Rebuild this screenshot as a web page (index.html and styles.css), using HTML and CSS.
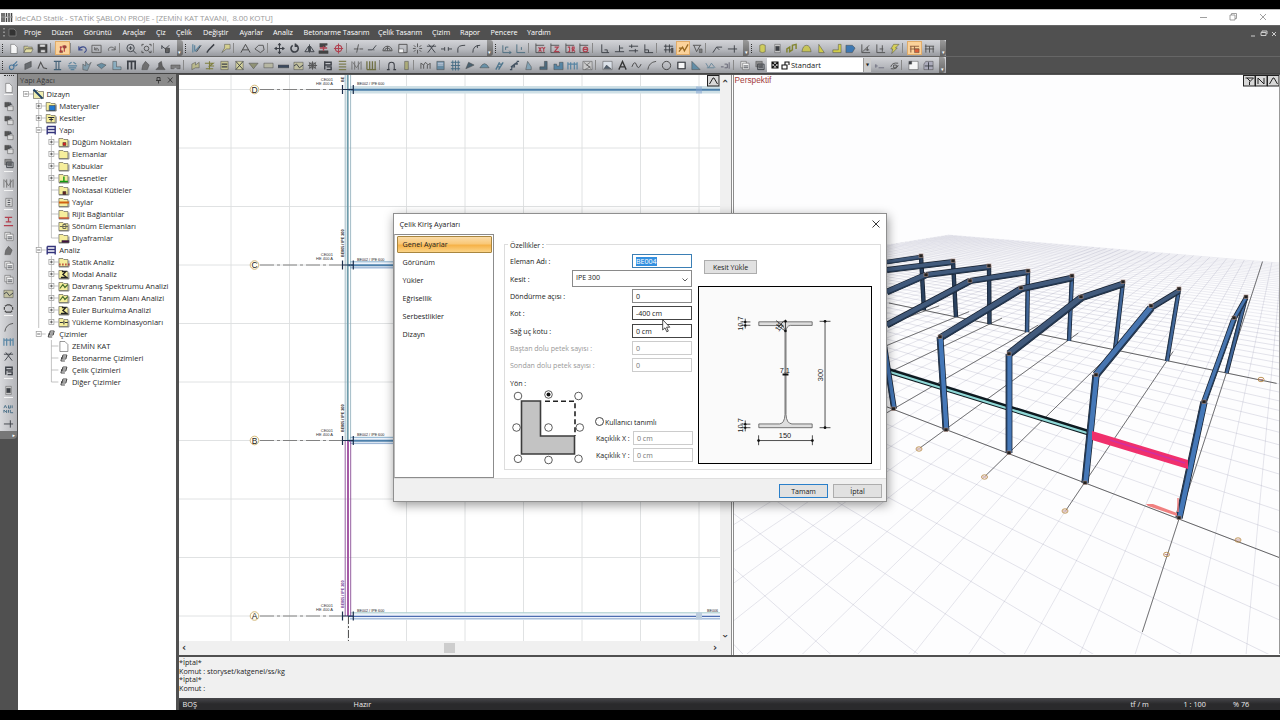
FILE: index.html
```html
<!DOCTYPE html>
<html lang="tr">
<head>
<meta charset="utf-8">
<title>ideCAD Statik</title>
<link rel="stylesheet" href="styles.css">
</head>
<body>
<div class="app">
  <header class="titlebar">
    <svg class="logo" viewBox="0 0 12 11"><path d="M1 1v9M3 1v9M5.500 1v4M5.500 6v4M8 1v9M10.500 1v9" stroke="#444" stroke-width="1.500"/><path d="M0 5h12" stroke="#999"/></svg>
    <span class="title">ideCAD Statik - STATİK ŞABLON PROJE - [ZEMİN KAT TAVANI,&nbsp; 8.00 KOTU]</span>
    <svg class="winbtns" viewBox="0 0 80 15"><g fill="none" stroke="#888" stroke-width=".8"><path d="M0 7.500h7M30 5h5v5h-5zM31.500 5v-1.500h5v5H35M60 4l6 6M66 4l-6 6"/></g></svg>
  </header>
  <nav class="menubar">
    <svg class="menuicon" viewBox="0 0 24 16"><path d="M4 4v9" stroke="#ccc" stroke-dasharray="1.500 2"/><path d="M9 5h5l2 2v5H9z" fill="#333" stroke="#888" stroke-width=".7"/></svg>
    <span style="width:27.500px">Proje</span><span style="width:32px">Düzen</span><span style="width:39px">Görüntü</span><span style="width:33.500px">Araçlar</span><span style="width:20px">Çiz</span><span style="width:27px">Çelik</span><span style="width:36.500px">Değiştir</span><span style="width:33.500px">Ayarlar</span><span style="width:30.500px">Analiz</span><span style="width:74.500px">Betonarme Tasarım</span><span style="width:54px">Çelik Tasarım</span><span style="width:28px">Çizim</span><span style="width:30.500px">Rapor</span><span style="width:36.500px">Pencere</span><span>Yardım</span>
    <svg class="mdibtns" viewBox="0 0 32 16"><path d="M3 12h4M13 8.500h5v3h-5zM14 8v-1h5v3M24 8l4 4M28 8l-4 4" fill="none" stroke="#ccc"/></svg>
  </nav>
  <div class="toolbar" id="bar1"></div>
  <div class="toolbar" id="bar2"></div>
  <main class="work">
    <div class="side"><div class="sidebar" id="side"></div></div>
    <aside class="tree">
      <div class="treehead"><span>Yapı Ağacı</span><svg viewBox="0 0 22 10"><path d="M3 2.500h3v3H3zM2 5.500h5M4.500 5.500v3M14 2.500l4.500 5M18.500 2.500l-4.500 5" fill="none" stroke="#333" stroke-width=".9"/></svg></div>
      <div class="rows" id="tree"></div>
    </aside>
    <div class="views">
      <div class="viewrow">
        <section class="plan">
          <svg class="plansvg" id="plan" viewBox="179 75 541 566"></svg>
          <div class="hscroll"><i>‹</i><b></b><i>›</i></div>
        </section>
        <div class="vscroll"><i>‹</i><i>›</i></div>
        <section class="persp"><svg id="persp" viewBox="734 75 546 579"></svg></section>
      </div>
      <div class="command"><p>*İptal*</p><p>Komut : storyset/katgenel/ss/kg</p><p>*İptal*</p><p>Komut :</p></div>
      <footer class="status"><span class="s1">BOŞ</span><span class="s2">Hazır</span><span class="s3">tf / m</span><span class="s4">1 : 100</span><span class="s5">% 76</span></footer>
    </div>
  </main>
</div>

<div class="dialog">
  <div class="dtitle"><span>Çelik Kiriş Ayarları</span><svg viewBox="0 0 8 8"><path d="M.5.5l7 7M7.500.5l-7 7" stroke="#222" stroke-width=".9"/></svg></div>
  <div class="dbody">
    <ul class="tabs"><li class="on">Genel Ayarlar</li><li>Görünüm</li><li>Yükler</li><li>Eğrisellik</li><li>Serbestlikler</li><li>Dizayn</li></ul>
    <fieldset class="group">
      <legend>Özellikler :</legend>
      <div class="form">
        <div class="f"><label>Eleman Adı :</label><div class="in focus"><mark>BE004</mark></div></div>
        <div class="f"><label>Kesit :</label><div class="in combo">IPE 300<svg viewBox="0 0 6 4"><path d="M.5.5L3 3 5.500.5" fill="none" stroke="#333" stroke-width=".8"/></svg></div></div>
        <div class="f"><label>Döndürme açısı :</label><div class="in">0</div></div>
        <div class="f"><label>Kot :</label><div class="in dark">-400 cm</div></div>
        <div class="f"><label>Sağ uç kotu :</label><div class="in dark">0 cm</div></div>
        <div class="f off"><label>Baştan dolu petek sayısı :</label><div class="in">0</div></div>
        <div class="f off"><label>Sondan dolu petek sayısı :</label><div class="in">0</div></div>
        <div class="f"><label>Yön :</label></div>
        <div class="dir">
          <svg viewBox="510 389 80 78">
            <path d="M521.500 401h19v35h34v18h-53z" fill="#c3c3c3" stroke="#3c3c3c" stroke-width="1.600"/>
            <path d="M545 401.300h30V436" fill="none" stroke="#222" stroke-width="1.600" stroke-dasharray="5 3"/>
            <g fill="#fff" stroke="#333" stroke-width=".8"><circle cx="518" cy="396" r="3.800"/><circle cx="548.500" cy="394.500" r="3.800"/><circle cx="578.500" cy="396" r="3.800"/><circle cx="516.500" cy="427.500" r="3.800"/><circle cx="548.500" cy="427.500" r="3.800"/><circle cx="579.800" cy="427.500" r="3.800"/><circle cx="518" cy="458.800" r="3.800"/><circle cx="548.500" cy="460" r="3.800"/><circle cx="578.500" cy="458.800" r="3.800"/></g>
            <circle cx="548.500" cy="394.500" r="2" fill="#111"/>
          </svg>
          <div class="user">
            <div class="radio"><i></i>Kullanıcı tanımlı</div>
            <div class="g"><label>Kaçıklık X :</label><div class="in">0 cm</div></div>
            <div class="g"><label>Kaçıklık Y :</label><div class="in">0 cm</div></div>
          </div>
        </div>
      </div>
      <div class="preview">
        <button class="btn">Kesit Yükle</button>
        <svg viewBox="698 286 174 178">
          <g fill="#dedede" stroke="#555" stroke-width=".8">
            <path d="M758.500 321.200h54v3.600h-22q-4 .5-4.500 6V415q.5 9 6 9.500h20.500v3.800h-54v-3.800h21q5-.5 5.500-9.500V331q-.5-5.500-4.500-6h-22z"/>
          </g>
          <g stroke="#222" stroke-width=".8" fill="none">
            <path d="M825.500 320v108.500M820 320.700h11M820 428.300h11M758.300 441.300h54.500M758.300 436v10M812.700 436v10M740 321.300h10M740 324.700h10M740 424.700h10M740 428.300h10M744.800 318v10M744.800 421v11M785.500 319v12M776 324l10 7M776 320l8 6M778 327l6-7"/>
          </g>
          <g fill="#111"><circle cx="825.500" cy="320.700" r="1.400"/><circle cx="825.500" cy="428.300" r="1.400"/><circle cx="758.300" cy="441.300" r="1.400"/><circle cx="812.700" cy="441.300" r="1.400"/><circle cx="744.800" cy="321.300" r="1.200"/><circle cx="744.800" cy="324.800" r="1.200"/><circle cx="744.800" cy="424.700" r="1.200"/><circle cx="744.800" cy="428.300" r="1.200"/><circle cx="785.500" cy="320.700" r="1.300"/><circle cx="785.500" cy="330.500" r="1.300"/><path d="M782.500 373.500h6v2h-6z"/></g>
          <g class="dim"><text x="785" y="439" text-anchor="middle">150</text><text x="784.800" y="372.500" text-anchor="middle">7.1</text><text transform="translate(823.500 375) rotate(-90)" text-anchor="middle">300</text><text transform="translate(743 323) rotate(-90)" text-anchor="middle">10.7</text><text transform="translate(743 426) rotate(-90)" text-anchor="middle">10.7</text><text transform="translate(781 328) rotate(-55)" text-anchor="middle">15</text></g>
        </svg>
      </div>
    </fieldset>
  </div>
  <div class="dfoot"><button class="btn ok">Tamam</button><button class="btn">İptal</button></div>
</div>
<svg class="cursor" viewBox="0 0 9 14"><path d="M.7.7v10.300l2.300-2.200 1.800 4 1.500-.7-1.700-3.900h3.200z" fill="#fff" stroke="#222" stroke-width=".8"/></svg>
<script src="app.js"></script>
</body>
</html>
```
FILE: styles.css
```css
* { box-sizing: border-box; margin: 0; padding: 0; }
body { width: 1280px; height: 720px; overflow: hidden; background: #000; font-family: "Open Sans", "Noto Sans", sans-serif; font-size: 7.5px; color: #222; position: relative; }
svg { display: block; }
.app { height: 710px; padding-top: 9px; display: flex; flex-direction: column; background: #000; }
.titlebar { height: 15.500px; flex: none; background: #fff; border-top: 1px solid #bbb; display: flex; align-items: center; }
.logo { width: 12px; height: 11px; margin: 0 2px 0 1px; }
.title { flex: 1; color: #9a9a9a; font-size: 8px; letter-spacing: -.15px; white-space: nowrap; }
.winbtns { width: 80px; height: 15px; }
.menubar { height: 15.500px; flex: none; background: #505050; color: #fff; display: flex; align-items: center; font-size: 7.3px; font-weight: 500; letter-spacing: -.08px; border-top: 1px solid #666; white-space: nowrap; padding-bottom: 1px; }
.menubar span { flex: none; }
.menuicon { width: 24px; height: 16px; flex: none; }
.mdibtns { width: 32px; height: 16px; margin-left: auto; }
.toolbar { height: 17px; flex: none; background: linear-gradient(90deg, transparent 946px, #505050 946px), linear-gradient(#d3d4d8, #b6b8bd 60%, #97999e); border-bottom: 1px solid #666; display: flex; align-items: center; }
#bar2 { border-bottom-color: #444; }
.ic { width: 14.720px; height: 15px; flex: none; padding: 2px 1.900px; }
.ic svg { width: 11px; height: 11px; opacity: .88; }
.ic.act { background: #fbd29a; border: 1px solid #e0ac6a; padding: 1px .9px; height: 14px; }
.sep { width: 5px; flex: none; height: 10px; border-left: 1px solid #888; border-right: 3px solid transparent; }
.grip { width: 5.500px; height: 9px; flex: none; border-left: 1.500px dotted #333; margin-left: 2px; margin-right: -1.500px; }
.end { width: 6px; height: 16px; flex: none; margin: 0 0 0 3.500px; background: linear-gradient(#9a9a9a, #666); border-radius: 0 3px 3px 0; color: #fff; font-size: 5px; line-height: 25px; text-align: center; overflow: hidden; }
.combo2 { width: 104px; height: 14px; flex: none; background: #fff; display: flex; align-items: center; font-size: 7.500px; margin-right: 1px; }
.combo2 svg { width: 22px; height: 10px; margin-left: 2px; }
.combo2 i { margin-left: auto; width: 8px; height: 14px; background: #ccc; border-left: 1px solid #999; font: 4px/14px "DejaVu Sans", sans-serif; text-align: center; }
.work { flex: 1; min-height: 0; display: flex; background: #505050; }
.side { width: 18px; flex: none; background: #505050; }
.sidebar { height: 361px; width: 17px; background: linear-gradient(90deg, #d8d9dc, #b4b5b9); border-radius: 0 0 4px 0; display: flex; flex-direction: column; align-items: center; }
.sidebar .ic { height: 14.450px; }
.sidebar .sep { width: 9px; height: 4.800px; border: 0; border-top: 1px solid #f4f4f4; }
.sidebar .grip { width: 10px; height: 4.500px; margin: 1px 0 0; border: 0; border-top: 1.500px dotted #333; }
.sidebar .tail { margin-top: auto; width: 17px; height: 8px; background: #777; color: #fff; font: 5px/8px "DejaVu Sans", sans-serif; text-align: right; padding-right: 2px; border-radius: 0 0 4px 0; }
.tree { width: 158px; flex: none; background: #fff; display: flex; flex-direction: column; }
.treehead { height: 12px; background: #8b8b8b; color: #3a3a3a; display: flex; align-items: center; justify-content: space-between; padding-left: 2px; font-size: 7.400px; }
.treehead svg { width: 22px; height: 10px; }
.rows { padding-top: 2px; }
.row { height: 12px; display: flex; align-items: center; white-space: nowrap; font-size: 7.600px; letter-spacing: -.03px; color: #2a2a2a; }
.row svg { height: 12px; flex: none; }
.row span { line-height: 12px; }
.views { flex: 1; margin-left: 3px; min-width: 0; display: flex; flex-direction: column; }
.viewrow { height: 581px; flex: none; display: flex; border-top: 1px solid #555; background: #fff; }
.plan { width: 541px; flex: none; display: flex; flex-direction: column; }
.plansvg { width: 541px; height: 566px; }
.plan text { font-family: "Liberation Sans", Arial, sans-serif; }
.hscroll { flex: 1; background: #f0f0f0; display: flex; align-items: center; justify-content: space-between; padding: 0 3px; width: 541px; }
.hscroll i, .vscroll i { font: bold 10px/10px "DejaVu Sans", sans-serif; color: #333; }
.hscroll b { width: 11px; height: 10px; background: #cdcdcd; }
.vscroll { width: 11px; background: #f0f0f0; display: flex; flex-direction: column; justify-content: space-between; align-items: center; padding: 1px 0 14px; }
.vscroll i { transform: rotate(90deg); }
.persp { flex: 1; border-left: 3px double #8d8d8d; min-width: 0; }
.persp svg { width: 546px; height: 579px; }
.persp text { font-family: "Liberation Sans", Arial, sans-serif; }
.command { height: 43px; flex: none; background: #f0f0f0; border-top: 2px solid #505050; padding-top: 1px; font-size: 7.200px; }
.command p { height: 8.700px; line-height: 8.700px; }
.status { flex: 1; background: linear-gradient(#47474b, #2a2a2c 50%); color: #eee; font-size: 7.300px; display: grid; grid-template-columns: 171px 777px 53px 49.500px 1fr; align-items: center; padding-left: 3.500px; }
.dialog { position: absolute; left: 393px; top: 213px; width: 494px; height: 289px; background: #fff; border: 1px solid #8f8f8f; box-shadow: 1px 3px 10px rgba(0,0,0,.4); display: flex; flex-direction: column; font-size: 7.100px; letter-spacing: -.04px; }
.dtitle { height: 19.500px; flex: none; display: flex; align-items: center; justify-content: space-between; padding: 0 6px 0 5.500px; font-size: 7.400px; }
.dtitle svg { width: 8px; height: 8px; }
.dbody { height: 244.500px; flex: none; display: flex; }
.tabs { width: 100px; border: 1px solid #8c8c8c; border-left-color: #bbb; list-style: none; padding: 1.500px 1.500px; font-size: 7.200px; letter-spacing: 0; }
.tabs li { height: 16.500px; line-height: 15.500px; padding-left: 5px; margin-bottom: 1.500px; border: 1px solid transparent; border-radius: 1px; }
.tabs .on { background: linear-gradient(#fbdca8, #f9c878 45%, #f6b248 55%, #fbd488); border-color: #a9863f; }
.group { margin: 6px 5px 8px 10px; flex: 1; border: 1px solid #ddd; display: flex; min-width: 0; }
.group legend { margin-left: 3px; padding: 0 2px; line-height: 10px; }
.form { width: 187px; flex: none; padding: 3px 0 0 5px; }
.f { height: 17.350px; display: flex; justify-content: space-between; align-items: center; }
.in { width: 60px; height: 14px; border: 1px solid #8a8a8a; background: #fff; line-height: 12px; padding-left: 3px; white-space: nowrap; }
.f label { white-space: nowrap; }
.focus { border-color: #3b7fb5; }
.focus mark { background: #3390e0; color: #fff; display: inline-block; line-height: 9px; }
.combo { width: 120px; height: 17px; display: flex; justify-content: space-between; padding-right: 3px; line-height: 13px; flex: none; }
.combo svg { width: 6px; height: 4px; margin-top: 7px; }
.dark { border-color: #444; }
.off { color: #999; }
.off .in, .g .in { border-color: #ccc; color: #777; }
.dir { display: flex; margin-top: -2px; }
.dir > svg { width: 80px; height: 78px; flex: none; }
.user { padding: 26px 0 0 5px; width: 103px; flex: none; }
.radio { display: flex; align-items: center; gap: 1px; height: 13px; margin-bottom: 1px; white-space: nowrap; }
.radio i { width: 9px; height: 9px; border: 1px solid #444; border-radius: 50%; }
.g { display: flex; justify-content: space-between; align-items: center; height: 17.350px; width: 97px; margin-left: 1px; white-space: nowrap; }
.preview { padding: 10.500px 0 0 6px; }
.preview svg { width: 174px; height: 178px; border: 1.500px solid #000; background: #fafafa; margin-top: 11.500px; }
.preview .btn { width: 53px; margin-left: 6px; }
.btn { display: block; height: 14px; width: 49px; border: 1px solid #adadad; background: #e1e1e1; font: 7.100px "Open Sans", "Noto Sans", sans-serif; color: #222; line-height: 11px; text-align: center; letter-spacing: -.04px; }
.dim text { font: 7.500px "Liberation Sans", Arial, sans-serif; fill: #222; }
.dfoot { flex: 1; background: #f0f0f0; border-top: 1px solid #dfdfdf; display: flex; justify-content: flex-end; gap: 5px; padding: 5px 4px 0 0; }
.ok { border: 1.500px solid #2a7fc9; }
.cursor { position: absolute; left: 662px; top: 319px; width: 9px; height: 14px; }
```
FILE: app.js
```js
// Icon artwork, 12x11 units. Each entry is [kind, path, colour].
const K = '#2b2f36', B = '#4f7d99', Y = '#d9d24a', R = '#b03040';
const s = (d, c = K, w = 1) => `<path d="${d}" fill="none" stroke="${c}" stroke-width="${w}"/>`;
const f = (d, c = K) => `<path d="${d}" fill="${c}" stroke="#333" stroke-width=".5"/>`;
const icons = {
  new: f('M3 1h4l3 3v7H3z', '#fff'),
  open: f('M1 3h4l1 1h4v2H3L1 10z', '#cfc98a') + f('M3 6h8l-2 4H1z', '#e9e3a0'),
  save: f('M1 1h10v9H1z', '#333') + f('M3 1h6v3H3zM4 7h5v3H4z', '#ddd'),
  lift: s('M4 3v6M8 2v7M3 4h3M6 3h4', R, 1.3) + f('M3 8h3v2H3zM7 3h3v2H7z', '#c22'),
  undo: s('M2 3v4h4M2 7c2-5 9-4 8 1l-2 2', '#2b3c86', 1.2),
  undob: s('M1 2h10v8H1zM4 4v3h3M4 7c1-3 5-2 4 1', '#555'),
  redo: s('M10 3v4H6M10 7C8 2 1 4 3 8', '#555'),
  zoom: s('M5 1a4 4 0 100 8a4 4 0 100-8M8 8l3 3M3 5h4M5 3v4'),
  ext: s('M1 3V1h2M9 1h2v2M11 8v2H9M3 10H1V8M6 3a2.500 2.500 0 100 5a2.500 2.500 0 100-5M8 8l2 2', '#444'),
  tool: s('M2 3l4 3 4-4M6 6v4h4V5M2 2v4') + f('M6 5h4v4H6z', '#555'),
  brush: s('M2 1v9M4 9l6-7M4 2v6', B, 1.3) + s('M6 9l5-7'),
  pen: s('M2 10l2-3 6-6', K, 1.6),
  call: f('M5 1h6v5H7L2 10l3-5z', '#d8d28a'),
  aa: s('M1 10L6 1l5 9M3 7h6', '#333'),
  poly: s('M1 6l4-4h5l1 5-4 3z', '#444'),
  move: s('M6 0v11M1 5.500h10M4.500 2L6 0l1.500 2M4.500 9L6 11l1.500-2M3 4L1 5.500 3 7M9 4l2 1.500L9 7', K, 1.1),
  rot: s('M4 2a4 4 0 103-.5M7 0v3h3', K, 1.7),
  mir: s('M6 1v9M5 3L1 9h4zM7 3l4 6H7z'),
  ib: f('M2 0h8v2H8v2H2zM1 8h10v3H1z', '#333') + s('M2 5h8M6 3v5', R, 1.5),
  sec: s('M2 1h8M1 10h10M6 1v5M3 6h6', R, 1.3),
  tgt: s('M6 2a3.500 3.500 0 100 7a3.500 3.500 0 100-7M1 5.500h10M6 0v11', R, 1.2),
  trim: s('M1 6h5M7 6h4M6 1L4 10', '#444'),
  extd: s('M1 7h5l4-5M7 7h1'),
  arch: s('M1 8a5 5 0 0110 0zM3 8a3 3 0 016 0M6 3v5', '#444'),
  scl: s('M2 1h9v9H2z', '#444') + f('M2 6h5v4H2z', '#fff'),
  exp: s('M6 0v4M6 7v4M1 5.500h3M8 5.500h3M2 2l2 2M10 2L8 4M2 9l2-2M10 9L8 7', '#444'),
  ring: s('M4 1.500h4M4 9.500h4M1.500 4v3M10.500 4v3M2 3l2-1M10 3L8 2M2 8l2 2M10 8l-2 2', '#333', 1.3),
  x: s('M1 3h10M2 10l7-9M10 10L3 1'),
  dash: s('M0 6h4M8 6h4M4 4v4M8 4v4'),
  arc: s('M2 10V6q0-4 8-4'),
  arc2: s('M2 10q0-8 8-8M7 2v3'),
  ax: s('M2 2v8h9M5 7V4h3M9 8l2 2-2 1', '#3c6478'),
  ax2: s('M2 1v9h9M7 4v3', '#3c6478'),
  xy: s('M1 0v10h10M1 2h9', '#444') + s('M4 4l3 5M7 4L4 9M8 4l1.500 2L11 4M9.500 6v3', R, 1.2),
  zz: s('M1 0v10h10M1 2h9', '#444') + s('M5 4h4L5 9h5', R, 1.3),
  r3: s('M1 0v10h10M1 2h9', '#444') + s('M3 4h2v5H3M8 9V4h2v2H8l3 3', R, 1.2),
  gl: s('M1 0v10h10M1 2h9', '#444') + s('M7 4a2.500 2.500 0 100 5a2.500 2.500 0 100-5M4 6.500h6', R, 1.2),
  l: s('M3 1v9h8M6 7h3v3'), t: s('M1 9h10M6 2v7M6 5h4'), eq: s('M1 3h10M1 8h10M4 1v4M8 6v4'),
  ll: s('M2 1v9h9M2 7h4v3'),
  grid: s('M1 3h10M1 7h8M3 1v9M7 1v9') + f('M9 5h2v5H9z', '#444'),
  snap: s('M1 9l4-5 2 4 4-7M1 5h4', '#8a5a10', 1.4),
  trg: s('M1 2h9M2 2l3 7 4-7', '#444') + f('M8 6h3v4H8z', '#777'),
  ar: s('M1 10l4-6h6M5 4l3 3'), cr: s('M1 6h10M8 2v8'),
  cyl: f('M3 2q3-2 6 0v7q-3 2-6 0z', '#d2cf50'),
  blk: f('M3 1h6v9H3z', '#ddd') + f('M4 3h4v5H4z'),
  hat: s('M1 10V6l3-2v5l3-2V2l4-1v5', '#7a7d1c', 1.6),
  dome: f('M1 9q1-7 5-7t5 7z', '#c9c649'),
  tri: f('M3 1v9h6z', '#d6d23c'), cor: f('M8 1h3v9H2V7h6z', '#d6d23c'),
  flag: f('M1 2h7l3 3-3 5H1z', '#2d6fb0'),
  ch: s('M2 1v9h9M3 9l7-7M6 7h4M8 4v4', '#444'),
  ch2: s('M2 1v9h9M8 2v7M5 6h4', '#444'),
  bolt: f('M5 1h6L7 5h2l-6 6 1-5H2z', Y),
  tbl: s('M1 3h10M1 6h10M2 1v9M6 3v7M10 3v7', '#444'),
  tblr: s('M1 3h10M1 6h10M2 3v7M6 3v4', '#8a5a3a', 1.2) + f('M6 6h5v4H6z', '#d8502a'),
  gear: s('M4 5a2.500 2.500 0 100 5a2.500 2.500 0 100-5M6 5l4-4M6 4a2 2 0 104 0', '#3c6f98', 1.2),
  wall: f('M2 4l7-3v6L2 10z', '#5c6064'), zig: s('M1 9l3-7 3 6 4 1', '#444', 1.2),
  i: s('M2 1h8M2 10h8M4.500 1v9M7.500 1v9', '#35566e', 1.2),
  bm: s('M1 6h10M2 4l3-2M10 4L7 2M2 8h8M4 10h4', B, 1.3),
  fan: f('M2 10V4l3 2V1l3 4 3-3-4 9z', '#7c99a8'),
  slab: f('M1 5l5-2 5 2-5 4z', '#5f8aa0'), corb: f('M2 1h4v6h5v3H2z', '#84acc0'),
  cols: s('M1 1h10M2 1v9M6 1v9M10 1v9', K, 1.8),
  rock: f('M2 10l1-5 3-4 4 4-2 5z', '#666'), hill: f('M1 10l3-3V3l3-2 1 5 3 4z', '#555'),
  brg: f('M1 9V5h10v4H8q-2-3-4 0z', '#777'),
  yf: f('M2 10V4l4-2v3l4-3v6H6z', '#b9b887'), ys: s('M1 3h9l-4 3h5M2 9h8M6 1v9', '#77772c', 1.2),
  yb: f('M2 1h8v9H2z', '#c8c68c') + s('M3 4h6M3 7h6', K, 1.4),
  note: f('M3 1h7v9H3z', '#ddd') + s('M5 3h3M5 5.500h3M5 8h3'),
  yx: f('M2 1h8v9H2z', '#d8d69a') + s('M2 1l8 9M10 1L2 10'),
  fnl: f('M1 3h10L6 9z', '#8a8c6b'), box: f('M1 3h10v5H1z', '#b7b7a0'), bar: f('M0 5h12v3H0z', '#2a3a50'),
  wav: f('M1 2h10v8H1z', '#c2c09a') + s('M1 6l3-2 3 4 4-3'),
  web: s('M6 1v9M1 5.500h10M2 2l8 7M10 2L2 9M3 3h6v5H3z', '#444'),
  flg: s('M3 1v9M3 2h7v3H3M5 7h5v3H5', K, 1.5), rws: s('M2 1h8M2 4h8M2 7h8M2 10h8', '#777745', 1.3),
  vee: s('M1 1v9M11 1v9M2 2l4 6 4-6M4 1v9M8 1v9', '#666'),
  vb: s('M1 1v9M4 1v9M7 1v9M10 1v9M1 10h10', '#666633', 1.4),
  om: s('M3 10V5q0-3 3-3t3 3v5M1 10h3M8 10h3', K, 1.1), pst: f('M4 1h4v9H4z', '#aaa970'),
  mm: s('M1 9V3l3 2 2-3 3 3 2-2v6M4 5v4M8 5v4', '#444'),
  pc: f('M2 1h8v9H2z', '#5d86a0') + s('M3 3h6M3 5h6', '#dde'),
  g3: s('M1 2h10M1 5.500h10M1 9h10M3 0v11M6 0v11M9 0v11', '#34607c'),
  wg: f('M2 9l3-7 6 3-4 2z', '#3b5565'), fn: f('M1 8q5-9 10 0z', '#5e8ca5'),
  ld: s('M2 10l4-8M5 10l5-8M3 7h4M5 4h4', '#3e6b85', 1.4), st: s('M1 10h2V7h3V4h3V1h2M2 7l8-6', '#345', 1.2),
  mt: f('M3 10l2-9 4 6v3z', '#7ca0b4'), lj: f('M7 1h3v9H2V7h5z', '#3f5f74'),
  cty: f('M1 4h3v2h3V2h4v8H1z', '#4a7ea0'), fc: s('M1 2v8M4 2v8M8 2v8M11 2v8M1 4h10', '#4a7ea0', 1.3),
  pz: f('M1 1h10v9H1z', '#ccc') + s('M2 2l8 7M9 2L5 5l4 2-6 3', '#555', .8),
  img: f('M1 1h10v9H1z', '#dfe6ee') + f('M2 9l3-4 2 2 3 2z', '#456'),
  A: s('M2 10L6 1l4 9M4 7h4', '#222', 1.4), sin: s('M1 7q3-8 5-2t5-1', '#333'),
  ac: s('M2 10Q3 2 11 1', '#444'), o: s('M6 1a4.500 4.500 0 100 9a4.500 4.500 0 100-9', '#333'),
  bx: f('M2 2h8v7H2z', '#fff') + s('M2 2h8v7H2z', K, 1.2), sq: f('M2 1v9h9z', '#5788a4'),
  dt: s('M1 3l3 5 3-5 4 5M2 8h8', '#5c7f95'), nn: s('M1 7h3M5 4h3v4H5M10 2v7', '#556'),
  doc: f('M2 1h6v7H2z', '#eee') + f('M4 3h7v7H4z', '#fff') + s('M5 6h5M5 8h5'),
  cp: f('M2 1h5v5H2z', '#444') + f('M5 5h6v5H5z', '#ddd') + s('M8 1v3M6 3h4'),
  lay: f('M2 1h7v6H2z', '#888') + s('M4 4h7v6H4zM5 6h5M5 8h5'),
  wb: s('M1 6h3M5 8h6M2 4v4', '#667'), cyc: s('M2 7q1-5 8-4M10 5q-1 5-8 4M5 5h3v3H5z', '#444'),
  pg: f('M3 1h8v9H1V4z', '#fff') + f('M1 1h3v3H1z'), pg2: f('M3 1h8v9H1V4z', '#aab') + s('M6 2v8M2 6h9'),
  auto: s('M1 4l1.500-3L4 4M6 1v3h2V1M10 1v3M1 9V6l3 3V6M6 6v3M8 6v3h3', '#34607c', 1)
};
const draw = n => `<svg viewBox="0 0 12 11">${icons[n]}</svg>`;
const build = (id, list) => {
  document.getElementById(id).innerHTML = list.split(' ').map(n => {
    if (n === '|') return '<div class="sep"></div>';
    if (n === ':') return '<div class="grip"></div>';
    if (n === '>') return '<div class="end">▾</div>';
    if (n === 'combo') return `<div class="combo2"><svg viewBox="0 0 22 10">${s('M3 2h6v6H3zM3 2l6 6M9 2L3 8M13 5h5v4h-5zM16 5V2h4v3', '#111', 1.1)}</svg><span>Standart</span><i>▼</i></div>`;
    if (n === 'tail') return '<div class="tail">▸</div>';
    return n[0] === '*' ? `<div class="ic act">${draw(n.slice(1))}</div>` : `<div class="ic">${draw(n)}</div>`;
  }).join('');
};
build('bar1', ': new open save | *lift | undo undob redo | zoom ext | tool > : brush pen call | aa poly | move rot mir ib tgt | trim extd arch scl exp x dash arc arc2 > : ax ax2 | xy zz r3 gl | l t eq ll | grid *snap trg | ar cr > : cyl blk hat dome tri cor flag ch ch2 bolt | *tblr tbl >');
build('bar2', ': gear wall zig i bm fan slab corb cols rock hill brg | yf ys yb yx fnl box bar wav web flg rws vee vb | om pst | mm pc g3 wg fn ld st mt lj cty fc pz | img A sin ac o bx sq dt nn | doc lay combo wb cyc | pg pg2 >');
build('side', ': new | cp cp cp cp lay | vee | note | sec doc rock doc doc wav ring | ac fc x flg | blk | auto cr tail');

// Project tree: [depth, expander, icon, label]
const rows = [
  [0, '-', 'root', 'Dizayn'], [1, '+', 'fb', 'Materyaller'], [1, '+', 'fk', 'Kesitler'], [1, '-', 'bld', 'Yapı'],
  [2, '+', 'fr', 'Düğüm Noktaları'], [2, '+', 'f', 'Elemanlar'], [2, '+', 'f', 'Kabuklar'], [2, '+', 'fg', 'Mesnetler'],
  [2, '', 'fd', 'Noktasal Kütleler'], [2, '', 'fo', 'Yaylar'], [2, '', 'fl', 'Rijit Bağlantılar'], [2, '', 'fc', 'Sönüm Elemanları'], [2, '', 'fp', 'Diyaframlar'],
  [1, '-', 'bld', 'Analiz'], [2, '+', 'fs', 'Statik Analiz'], [2, '+', 'fz', 'Modal Analiz'], [2, '+', 'fw', 'Davranış Spektrumu Analizi'],
  [2, '+', 'fw', 'Zaman Tanım Alanı Analizi'], [2, '+', 'fz', 'Euler Burkulma Analizi'], [2, '+', 'fm', 'Yükleme Kombinasyonları'],
  [1, '-', 'dr', 'Çizimler'], [2, '', 'pg', 'ZEMİN KAT'], [2, '', 'dr', 'Betonarme Çizimleri'], [2, '', 'dr', 'Çelik Çizimleri'], [2, '', 'dr', 'Diğer Çizimler']
];
const marks = {
  fb: f('M4 5h6v5H4z', '#2378d0'), fk: s('M3 5h6M6 5v4M4 7h4'), fr: f('M5 6h3v3H5z', '#d22'), fg: s('M2 9h8M6 4v5', '#191', 1.4),
  fd: f('M5 7h3v3H5z', '#622'), fo: s('M1 6h10', '#d06010', 2), fl: s('M1 9.500h10', '#d05030', 1.4), fc: s('M2 6h8M5 4v4h3V4z', '#665'),
  fp: f('M4 8h7v2H4z', '#414'), fs: s('M2 9v-2M5 9V7M8 9V7M11 9V7', '#a22', 1.2), fz: s('M4 3h4L5 6l4 3H3', '#222', 1.3), fw: s('M2 8l3-4 2 3 3-3', '#4a7030', 1.2), fm: s('M2 6h3M7 6h3M6 4v4')
};
const treeIcon = k => {
  if (k === 'bld') return s('M2 2h8v8M2 2v8M2 5h8M2 8h8', '#33337b', 1.4);
  if (k === 'pg') return f('M2 1h5l3 3v7H2z', '#fff');
  if (k === 'dr') return s('M5 2.500h4l-1 4H4zM4 4.500l-1 4h4M5 4.500h3', '#333', .9);
  if (k === 'root') return f('M1 2h4l1 1h5v7H1z', '#f1efb0') + s('M1 1l9 9', '#246', 2);
  return f('M1 2h4l1 1h4v7H1z', '#f6ee9c') + s('M1 10.500h10V4', '#666', .8) + (marks[k] || '');
};
document.getElementById('tree').innerHTML = rows.map(([d, e, k, t], n) => {
  const x = 8 + d * 12.7, w = x + 18.5, g = '#aaa';
  let a = s(`M${x} 6h7`, g, .7);
  if (d > 0 && n < 20) a += s('M20.700 0v12', g, .7);
  if (d === 2) a += s(`M${x} 0v${n === 12 || n === 24 || n === 19 ? 6 : 12}`, g, .7);
  if (e) a += `<rect x="${x - 2.500}" y="3.500" width="5" height="5" fill="#fff" stroke="#999" stroke-width=".7"/>` + s(`M${x - 1.500} 6h3${e === '+' ? `M${x} 4.500v3` : ''}`, '#333', .7);
  return `<div class="row"><svg width="${w + 2}" viewBox="0 0 ${w + 2} 12">${a}<g transform="translate(${x + 6.500} .5)">${treeIcon(k)}</g></svg><span>${t}</span></div>`;
}).join('');

// Plan view
const L = (x1, y1, x2, y2, c, w = 1, extra = '') => `<line x1="${x1}" y1="${y1}" x2="${x2}" y2="${y2}" stroke="${c}" stroke-width="${w}" ${extra}/>`;
let p = '';
for (let x = 231; x < 720; x += 58.5) p += L(x, 75, x, 641, '#dcdfe0', .9);
for (let y = 89.500; y < 641; y += 58.5) p += L(179, y, 720, y, '#dcdfe0', .9);
[['D', 89.500], ['C', 265], ['B', 440.500], ['A', 616]].forEach(([n, y]) => {
  p += L(260, y, 343, y, '#777', .9, 'stroke-dasharray="14 3 3 3"');
  p += `<circle cx="254.500" cy="${y}" r="4.300" fill="#fffdf2" stroke="#c9a860" stroke-width=".8"/><text x="254.500" y="${y + 3}" font-size="8.500" text-anchor="middle" fill="#222">${n}</text>`;
  p += `<text x="333" y="${y - 9}" font-size="4" text-anchor="end" fill="#333">CE001</text><text x="333" y="${y - 5}" font-size="4" text-anchor="end" fill="#333">HE 400 A</text>`;
  p += `<text x="357" y="${y - 4.500}" font-size="3.700" fill="#222">BE002 / IPE 600</text>`;
  p += `<rect x="350" y="${y - 3.500}" width="370" height="7.500" fill="${n === 'D' ? '#cfe0e6' : '#eef3fb'}"/>`;
  if (n !== 'D') p += L(350, y - 3.200, 720, y - 3.200, n === 'A' ? '#9fc6c6' : '#7faacb', .9) + L(350, y + 2.800, 720, y + 2.800, '#7f9fc6', .9);
  p += L(348, y + .3, 720, y + .3, n === 'A' ? '#4b6cb0' : '#4c80ab', n === 'A' ? 1.300 : 2);
});
p += L(345.200, 75, 345.200, 440, '#8aa9b8', .8) + L(347.700, 75, 347.700, 440, '#6f9dac', 1.800) + L(350.600, 75, 350.600, 440, '#8aa9b8', .8);
p += L(345.200, 440, 345.200, 616, '#8a4d96', .9) + L(348, 440, 348, 616, '#a65ba6', 2) + L(350.700, 440, 350.700, 616, '#8a4d96', .9);
p += L(348.500, 616, 348.500, 641, '#444', .9, 'stroke-dasharray="8 2 2 2"');
[89.500, 265, 440.500, 616].forEach(y => { p += L(342.500, y - 4.500, 342.500, y + 4.500, '#1c2f4c', 1.200) + L(353.300, y - 4.500, 353.300, y + 4.500, '#1c2f4c', 1.200) + L(342.500, y, 353, y, '#1c2f4c', 1); });
[[82, '#222'], [257, '#222'], [432, '#222'], [608, '#6a2f8e']].forEach(([y, c]) => { p += `<text transform="translate(344.300 ${y}) rotate(-90)" font-size="3.700" font-weight="bold" fill="${c}">${y === 82 ? 'BE' : 'BE005 / IPE 300'}</text>`; });
p += `<rect x="696" y="86.500" width="6" height="7" fill="#7f9fcf" opacity=".5"/><rect x="696" y="612.500" width="6" height="7" fill="#bcd" /><text x="707" y="612" font-size="3.700" fill="#222">BE006</text>`;
const vb = (x, d) => `<rect x="${x}" y="75.500" width="11.500" height="10.500" fill="#d8d8d8" stroke="#222" stroke-width="1"/>` + s(d, '#222', 1);
p += vb(707.500, 'M709.500 84l3.500-6h1l3.500 6');
document.getElementById('plan').innerHTML = p;

// Perspective view: ground plane with two vanishing points
const pt = (a, b) => { const w = 1 + a + b; return [(1179 + 296 * a + 1289 * b) / w, (519 + 180 * a + 180 * b) / w]; };
const seg = (a1, b1, a2, b2, c, w) => { const q = pt(a1, b1), r = pt(a2, b2); return L(q[0].toFixed(1), q[1].toFixed(1), r[0].toFixed(1), r[1].toFixed(1), c, w); };
const AU = 0.1198, BV = 0.7565, sa = AU / 3, sb = BV / 12, AM = 2, BM = sb * 50;
let g = '<rect x="734" y="75" width="546" height="579" fill="#fdfdfe"/>';
for (let n = -22; n <= 50; n++) { const a = n * sa; g += seg(a, Math.max(-.8, -.85 - a), a, BM, '#8c8ca8', n > 22 ? .13 : .22); }
for (let n = -12; n <= 50; n++) { const b = n * sb; g += seg(Math.max(-.8, -.85 - b), b, AM, b, '#8c8ca8', n > 22 ? .16 : .24); }
g += seg(0, -.25, 0, BM, '#555', .8);
for (let n = 1; n < 8; n++) g += seg(n * AU, -.093, n * AU, BV + .1, '#555', .8);
g += seg(-.2, 0, 1, 0, '#444', .8) + seg(-.09, BV, 1, BV, '#444', .8);
const ring = (x, y) => `<ellipse cx="${x}" cy="${y}" rx="3" ry="2.200" fill="none" stroke="#b98a4a" stroke-width=".9"/><path d="M${x - 2} ${y}h4" stroke="#a66" stroke-width=".7"/>`;
g += ring(1166.500, 554.500) + ring(1238, 540) + ring(1065, 511) + ring(984.500, 477) + ring(919, 449) + ring(1261, 379.500);
const mem = (x1, y1, x2, y2, w, c = '#456a99') => {
  const dx = x2 - x1, dy = y2 - y1, len = Math.hypot(dx, dy), nx = -dy / len * w / 2, ny = dx / len * w / 2;
  return L(x1, y1, x2, y2, '#17202e', w + .8) + L(x1, y1, x2, y2, c, w - .7) + L(x1 + nx * .75, y1 + ny * .75, x2 + nx * .75, y2 + ny * .75, '#22364f', w * .2);
};
const cap = (x, y) => `<rect x="${x - 2}" y="${y - 2}" width="4" height="3.500" fill="#222" stroke="#a98a80" stroke-width=".6"/>`;
// Far columns and rafters, back frame first
[[921, 256, 924, 310], [953, 261, 956, 317], [989, 266, 989.500, 324], [1028, 271, 1027, 332], [1072, 276, 1069, 341], [1123, 282, 1115, 350], [1179, 289, 1167, 361], [1246, 297, 1226.500, 373]].forEach((c, n) => {
  g += mem(...c, 3.600, n < 3 ? '#2c4260' : '#41679a');
});
[[887, 262, 921, 257, 4], [887, 270, 953, 262, 5], [926, 275, 989, 267, 5], [887, 292, 926, 275, 6], [970, 281, 1028, 272, 5.500], [887, 325, 970, 281, 6], [1021, 289, 1072, 278, 6], [940, 338, 1021, 289, 6.500], [1081, 298, 1123, 284, 6], [1009, 354, 1081, 298, 7], [1151, 308, 1179, 291, 5], [1096, 375, 1151, 308, 7], [1234, 319, 1246, 298, 4], [1204, 402, 1234, 319, 5]].forEach((c, n) => {
  g += mem(...c, n < 11 ? '#415a7c' : '#4775b0');
});
[[921, 256], [953, 261], [989, 266], [1028, 271], [1072, 276], [1123, 282], [1179, 289], [1246, 297], [926, 275], [970, 281], [1021, 288], [1081, 297], [1151, 306], [1234, 318]].forEach(c => { g += cap(...c); });
g += L(886, 370, 1088, 432.500, '#0e1a20', 5.600) + L(886, 370.800, 1088, 433.300, '#8fd8d6', 2.200);
[[881, 325, 894, 409, 5], [940, 337, 946, 430, 6], [1009, 354, 1009, 453, 6], [1096, 375, 1085, 483, 6.500], [1204, 402, 1179, 518, 6.500]].forEach(c => { g += mem(...c, '#4578b8'); });
g += '<path d="M1092 431L1188 460v9l-96-29z" fill="#f0306c"/><path d="M1110 440l75 23" stroke="#d030a0" stroke-width="1.500"/>';
g += '<path d="M1146 504l7 0 24 9v3l-29-10z" fill="#f08080"/><path d="M1178 512v-14" stroke="#f08080" stroke-width="1.500"/>';
[[940, 337], [1009, 354], [1096, 375], [1204, 402], [893.500, 409], [946, 430], [1009, 453], [1085, 483], [1179, 518]].forEach(c => { g += cap(...c); });
g += vb(1243.500, 'M1245.500 78h8l-4 4v3M1247 78l3 3') + vb(1255.500, 'M1258 84v-6l6 6v-6') + vb(1267.500, 'M1269.500 84l3.500-6h1l3.500 6');
g += '<text x="734.500" y="83" font-size="8.300" fill="#a33c3c">Perspektif</text><path d="M1279.500 75v579" stroke="#999"/>';
document.getElementById('persp').innerHTML = g;
```
